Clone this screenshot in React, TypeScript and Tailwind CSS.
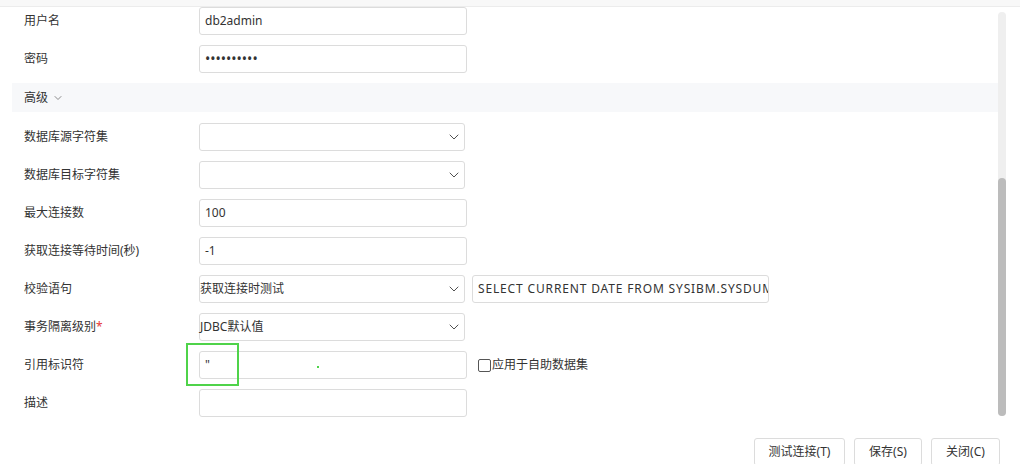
import { ChevronDown } from "lucide-react";

const font = { fontFamily: '"Noto Sans", "Noto Sans CJK SC", sans-serif' };

function Row({ label, required, children }: { label: string; required?: boolean; children: React.ReactNode }) {
  return (
    <div className="flex items-center mt-[10px] h-[28px]">
      <div className="w-[187px] pl-3 text-[12px] text-[#333]">
        {label}
        {required && <span className="text-[#e53935]">*</span>}
      </div>
      {children}
    </div>
  );
}

function TextBox({ value, w = "w-[268px]", password, wide }: { value?: string; w?: string; password?: boolean; wide?: boolean }) {
  return (
    <div className={`${w} h-[28px] border border-[#dcdcdc] rounded-[3px] bg-white flex items-center pl-[5px] overflow-hidden whitespace-nowrap text-[12px] text-[#333] ${wide ? "tracking-[0.85px]" : ""}`}>
      {password ? <span className="text-[14px] leading-none">••••••••••</span> : value}
    </div>
  );
}

function SelectBox({ value }: { value?: string }) {
  return (
    <div className="w-[266px] h-[28px] border border-[#dcdcdc] rounded-[3px] bg-white flex items-center justify-between pr-[2px] text-[12px] text-[#333]">
      <span>{value}</span>
      <ChevronDown className="w-[16px] h-[16px] text-[#444]" strokeWidth={1.4} />
    </div>
  );
}

export default function App() {
  return (
    <div className="w-[1020px] h-[464px] bg-white overflow-hidden flex flex-col" style={font}>
      <div className="h-[7px] bg-[#f8f8f8] border-b border-[#ececec] shrink-0" />
      <div className="flex h-[426px] shrink-0 overflow-hidden">
        <div className="flex-1 pl-3 relative">
          <div className="mt-[-10px]">
            <Row label="用户名">
              <TextBox value="db2admin" />
            </Row>
            <Row label="密码">
              <TextBox password />
            </Row>
            <div className="mt-[10px] h-[29px] bg-[#f7f8fa] flex items-center pl-3 text-[12px] text-[#333] gap-1">
              高级
              <ChevronDown className="w-[12px] h-[12px] text-[#666]" strokeWidth={1.5} />
            </div>
            <div className="h-[1px]" />
            <Row label="数据库源字符集">
              <SelectBox />
            </Row>
            <Row label="数据库目标字符集">
              <SelectBox />
            </Row>
            <Row label="最大连接数">
              <TextBox value="100" />
            </Row>
            <Row label="获取连接等待时间(秒)">
              <TextBox value="-1" />
            </Row>
            <Row label="校验语句">
              <SelectBox value="获取连接时测试" />
              <div className="ml-[7px]">
                <TextBox value="SELECT CURRENT DATE FROM SYSIBM.SYSDUMMY1" w="w-[297px]" wide />
              </div>
            </Row>
            <Row label="事务隔离级别" required>
              <SelectBox value="JDBC默认值" />
            </Row>
            <Row label="引用标识符">
              <div className="relative">
                <TextBox value={'"'} />
                <div className="absolute left-[-13px] top-[-8px] w-[53px] h-[43px] border-2 border-[#4fd34a]" />
                <div className="absolute left-[118px] top-[15px] w-[2px] h-[2px] bg-[#4fd34a]" />
              </div>
              <label className="ml-[11px] flex items-center text-[12px] text-[#333]">
                <span className="w-[13px] h-[13px] border border-[#555] rounded-[2px] mr-[1px]" />
                应用于自助数据集
              </label>
            </Row>
            <Row label="描述">
              <TextBox />
            </Row>
          </div>
        </div>
        <div className="w-[8px] mr-[14px] mt-[5px] h-[404px] bg-[#efefef] rounded-full flex flex-col justify-end">
          <div className="h-[238px] bg-[#bcbcbc] rounded-full" />
        </div>
      </div>
      <div className="flex justify-end gap-[9px] pr-[20px] mt-[5px]">
        <button className="w-[91px] h-[28px] border border-[#dcdcdc] rounded-[3px] text-[12px] text-[#333] bg-white">测试连接(T)</button>
        <button className="w-[68px] h-[28px] border border-[#dcdcdc] rounded-[3px] text-[12px] text-[#333] bg-white">保存(S)</button>
        <button className="w-[69px] h-[28px] border border-[#dcdcdc] rounded-[3px] text-[12px] text-[#333] bg-white">关闭(C)</button>
      </div>
    </div>
  );
}
